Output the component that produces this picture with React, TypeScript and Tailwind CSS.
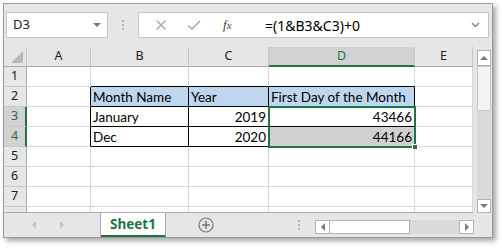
import React from "react";

const ui = { fontFamily: '"Noto Sans", "Open Sans", sans-serif' };
const cellFont = { fontFamily: 'Lato, "Noto Sans", sans-serif' };

const colW = [64, 98, 80, 146, 58];
const colNames = ["A", "B", "C", "D", "E"];

type Cell = { t?: string; right?: boolean; bg?: string; bR?: boolean; bB?: boolean };

function rowCells(r: number): Cell[] {
  const cells: Cell[] = [{}, {}, {}, {}, {}];
  if (r === 1) {
    cells[1].bB = true; cells[2].bB = true; cells[3].bB = true;
  }
  if (r >= 2 && r <= 4) {
    cells[0].bR = true;
    for (let i = 1; i <= 3; i++) { cells[i].bR = true; cells[i].bB = true; }
  }
  if (r === 2) {
    cells[1] = { ...cells[1], t: "Month Name", bg: "#bdd7ee" };
    cells[2] = { ...cells[2], t: "Year", bg: "#bdd7ee" };
    cells[3] = { ...cells[3], t: "First Day of the Month", bg: "#bdd7ee" };
  }
  if (r === 3) {
    cells[1].t = "January";
    cells[2] = { ...cells[2], t: "2019", right: true };
    cells[3] = { ...cells[3], t: "43466", right: true };
  }
  if (r === 4) {
    cells[1].t = "Dec";
    cells[2] = { ...cells[2], t: "2020", right: true };
    cells[3] = { ...cells[3], t: "44166", right: true, bg: "#d0d0d0" };
  }
  return cells;
}

function Row({ r, h, label = true }: { r: number; h: number; label?: boolean }) {
  const cells = rowCells(r);
  const sel = r === 3 || r === 4;
  return (
    <div className="flex" style={{ height: h }}>
      <div
        className={`w-[23px] shrink-0 border-b border-b-[#c8c8c8] text-[12.5px] pl-[7px] flex items-center ${sel ? "bg-[#d2d2d2] text-[#217346] border-r-2 border-r-[#217346]" : "bg-[#e6e6e6] text-[#222] border-r border-r-[#ababab]"}`}
        style={ui}
      >
        {label ? r : ""}
      </div>
      {cells.map((c, i) => (
        <div
          key={i}
          className={`shrink-0 border-r border-b flex items-end pb-[2px] px-[2px] text-[13.5px] leading-none text-black overflow-hidden whitespace-nowrap ${c.right ? "justify-end" : "justify-start"} ${c.bR ? "border-r-black" : "border-r-[#d9d9d9]"} ${c.bB ? "border-b-black" : "border-b-[#d9d9d9]"}`}
          style={{ width: colW[i], background: c.bg ?? "#ffffff", ...cellFont }}
        >
          {c.t}
        </div>
      ))}
    </div>
  );
}

function Tri({ dir, color = "#7a7a7a" }: { dir: "up" | "down" | "left" | "right"; color?: string }) {
  const pts: Record<string, string> = {
    up: "0,5 4,1 8,5",
    down: "0,1 4,5 8,1",
    left: "5,0 1,4 5,8",
    right: "1,0 5,4 1,8",
  };
  const vert = dir === "up" || dir === "down";
  return (
    <svg width={vert ? 8 : 6} height={vert ? 6 : 8} viewBox={vert ? "0 0 8 6" : "0 0 6 8"}>
      <polygon points={pts[dir]} fill={color} />
    </svg>
  );
}

function Dots() {
  return (
    <div className="flex flex-col gap-[2px]">
      <div className="w-[2px] h-[2px] bg-[#b4b4b4]" />
      <div className="w-[2px] h-[2px] bg-[#b4b4b4]" />
      <div className="w-[2px] h-[2px] bg-[#b4b4b4]" />
    </div>
  );
}

export default function App() {
  return (
    <div className="w-[502px] h-[249px] bg-white pl-[3px] pt-[3px]">
      <div className="w-[490px] h-[235px] border border-[#9a9a9a] bg-[#e6e6e6] flex flex-col shadow-[3px_3px_5px_rgba(0,0,0,0.35)]">
        {/* Formula toolbar */}
        <div className="h-[43px] shrink-0 flex items-start pt-[8px] pl-[2px]">
          <div className="w-[102px] h-[26px] bg-white border border-[#c6c6c6] flex items-center justify-between pl-[6px] pr-[6px]">
            <span className="text-[13px] text-[#222]" style={ui}>D3</span>
            <Tri dir="down" color="#777" />
          </div>
          <div className="w-[30px] h-[26px] flex items-center justify-center">
            <Dots />
          </div>
          <div className="w-[351px] h-[26px] bg-white border border-[#c6c6c6] flex items-center">
            <div className="w-[126px] flex items-center pl-[16px]">
              <svg width="12" height="12" viewBox="0 0 12 12">
                <path d="M1.5 1.5 L10.5 10.5 M10.5 1.5 L1.5 10.5" stroke="#a8a8a8" strokeWidth="1.4" />
              </svg>
              <svg width="14" height="12" viewBox="0 0 14 12" className="ml-[20px]">
                <path d="M1 6.5 L5 10 L13 2" stroke="#a8a8a8" strokeWidth="1.6" fill="none" />
              </svg>
              <span
                className="ml-[22px] text-[13px] italic text-[#444]"
                style={{ fontFamily: '"Liberation Serif", serif' }}
              >
                f<span className="text-[11px]">x</span>
              </span>
            </div>
            <span className="flex-1 text-[14px] text-black" style={ui}>=(1&amp;B3&amp;C3)+0</span>
            <div className="pr-[8px]">
              <svg width="9" height="6" viewBox="0 0 9 6">
                <path d="M1 1 L4.5 4.5 L8 1" stroke="#888" strokeWidth="1.5" fill="none" />
              </svg>
            </div>
          </div>
        </div>

        {/* Sheet area */}
        <div className="h-[166px] shrink-0 flex">
          <div className="w-[469px] shrink-0 relative overflow-hidden bg-white border-b border-b-[#ababab]">
            {/* column header */}
            <div className="flex h-[20px]">
              <div className="w-[23px] shrink-0 bg-[#e6e6e6] border-r border-r-[#c6c6c6] border-b border-b-[#ababab] relative">
                <svg width="12" height="12" viewBox="0 0 12 12" className="absolute left-[7px] top-[4px]">
                  <polygon points="12,0 12,12 0,12" fill="#b8b8b8" />
                </svg>
              </div>
              {colNames.map((n, i) => (
                <div
                  key={n}
                  className={`shrink-0 border-r border-r-[#c6c6c6] flex items-center justify-center text-[12.5px] ${n === "D" ? "bg-[#d2d2d2] text-[#217346] border-b-2 border-b-[#217346]" : "bg-[#e6e6e6] text-[#222] border-b border-b-[#ababab]"}`}
                  style={{ width: colW[i], ...ui }}
                >
                  {n}
                </div>
              ))}
            </div>
            {[1, 2, 3, 4, 5, 6, 7].map((r) => (
              <Row key={r} r={r} h={20} />
            ))}
            <Row r={8} h={20} label={false} />
            {/* selection */}
            <div className="absolute left-[264px] top-[59px] w-[148px] h-[42px] border-2 border-[#217346] pointer-events-none" />
            <div className="absolute left-[408px] top-[97px] w-[6px] h-[6px] bg-[#217346] border border-white" />
          </div>
          {/* vertical scrollbar */}
          <div className="flex-1 pl-[4px] pt-[3px] flex flex-col">
            <div className="w-[14px] h-[16px] bg-white border border-[#b4b4b4] flex items-center justify-center">
              <Tri dir="up" />
            </div>
            <div className="w-[14px] h-[45px] bg-[#f4f4f4] border border-[#c8c8c8]" />
            <div className="w-[14px] flex-1 bg-[#dadada]" />
            <div className="w-[14px] h-[14px] bg-white border border-[#b4b4b4] flex items-center justify-center">
              <Tri dir="down" />
            </div>
          </div>
        </div>

        {/* tab bar */}
        <div className="flex-1 flex">
          <div className="w-[97px] shrink-0 border-r border-r-[#ababab] flex items-center">
            <div className="ml-[27px]"><Tri dir="left" color="#c4c4c4" /></div>
            <div className="ml-[22px]"><Tri dir="right" color="#c4c4c4" /></div>
          </div>
          <div className="w-[65px] shrink-0 bg-white border-r border-r-[#ababab] border-b-2 border-b-[#217346] flex items-center justify-center">
            <span className="text-[13.5px] font-bold text-[#217346]" style={ui}>Sheet1</span>
          </div>
          <div className="w-[80px] shrink-0 flex items-center justify-center">
            <svg width="16" height="16" viewBox="0 0 16 16">
              <circle cx="8" cy="8" r="7" stroke="#777" strokeWidth="1.2" fill="none" />
              <path d="M8 4 V12 M4 8 H12" stroke="#777" strokeWidth="1.5" />
            </svg>
          </div>
          <div className="w-[69px] shrink-0 flex items-center justify-end pr-[15px]">
            <Dots />
          </div>
          <div className="w-[159px] shrink-0 h-[14px] mt-[7px] flex">
            <div className="w-[15px] h-[14px] bg-white border border-[#b4b4b4] flex items-center justify-center">
              <Tri dir="left" />
            </div>
            <div className="w-[80px] h-[14px] bg-white border border-[#b4b4b4] border-l-0" />
            <div className="flex-1 h-[14px] bg-[#dadada]" />
            <div className="w-[15px] h-[14px] bg-white border border-[#b4b4b4] flex items-center justify-center">
              <Tri dir="right" />
            </div>
          </div>
        </div>
      </div>
    </div>
  );
}
